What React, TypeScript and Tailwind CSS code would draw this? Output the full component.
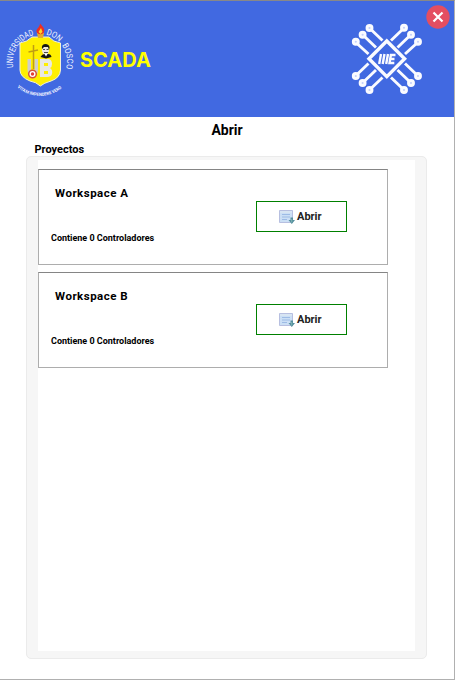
import React from "react";

function UniversityLogo() {
  return (
    <svg width="80" height="90" viewBox="0 0 80 90" className="shrink-0">
      <defs>
        <path id="leftArc" d="M13.4 52.5 A27.5 27.5 0 0 1 35 20" />
        <path id="rightArc" d="M46 19.5 A28 28 0 0 1 66 54" />
        <path id="bottomArc" d="M16 71 A34 34 0 0 0 64 71" />
      </defs>
      <g fill="#f0f3ff" className="font-['Roboto']">
        <text fontSize="8.8"><textPath href="#leftArc" textLength="42" lengthAdjust="spacingAndGlyphs">UNIVERSIDAD</textPath></text>
        <text fontSize="8.6" wordSpacing="2.5"><textPath href="#rightArc" textLength="44" lengthAdjust="spacingAndGlyphs">DON BOSCO</textPath></text>
        <text fontSize="4.4" fontWeight="700"><textPath href="#bottomArc" startOffset="2" textLength="48" lengthAdjust="spacingAndGlyphs">VITAM IMPENDERE VERO</textPath></text>
      </g>
      <path d="M20 28 Q27 27 32 22 H49 Q53 27 60.5 28 V55 Q60 63 51 66 Q44 68 40.3 71 Q36 67 30 66 Q20 62 20 55 Z" fill="#ffef00" stroke="#f4f3d5" strokeWidth="1" />
      <path d="M37 18 H44 L43 23 H38 Z" fill="#e4ac2c" />
      <path d="M40 8.5 C43 12 45.5 14 43.5 18 Q40.5 20.5 37.2 18 C34.5 14 40 13 40 8.5Z" fill="#ed2e22" />
      <path d="M41 13 L42.5 17 L40.5 19 L38.5 17Z" fill="#ffd525" />
      <path d="M27.5 44 V55 Q27.5 61 33 61 Q38 61 38 55 V44 H34.5 V56 H31 V44Z" fill="#cfcfcb" />
      <path d="M40 44 H49 Q52 45 52 49 Q52 52 50 53 Q53 55 52 59 Q51 62 47 62 H40Z M44 48 V51 H48 V48Z M44 56 V59 H48 V56Z" fill="#e9e8e4" fillRule="evenodd" />
      <path d="M33.5 30 V54 M28.5 37 L38 35" stroke="#bf9d12" strokeWidth="1.5" />
      <circle cx="32.5" cy="59" r="3.8" fill="#fff" stroke="#d65338" strokeWidth="1.5" />
      <circle cx="32.5" cy="59" r="1.7" fill="#e53d33" />
      <ellipse cx="45.5" cy="35" rx="3.5" ry="4.8" fill="#eee9de" />
      <path d="M42 34 Q41 29 46 29 Q51 30 49 35 L48 32 L44 32Z" fill="#171715" />
      <path d="M43 34.5 H45 M46.5 34.5 H48.5 M44 37.5 H48" stroke="#252525" strokeWidth=".8" />
      <path d="M40.5 42 Q42 39 44.5 39 L48 39 Q51 39 51.5 42 L46 43.5Z" fill="#171715" />
      <path d="M44.5 39 L46 41.5 L47.5 39Z" fill="#fff" />
    </svg>
  );
}

function CircuitLogo() {
  return (
    <svg width="85" height="85" viewBox="0 0 85 85" fill="none" stroke="#fafbff">
      <path d="M41.8 26 L59.6 43.8 L41.8 61.6 L24 43.8Z" strokeWidth="3.4" />
      <g strokeWidth="2.9">
        <path d="M26 14.5 L37.5 25.5 M19 21 L31 32.5 M12 28.5 L23.5 39 M57.5 14.5 L46 25.5 M64.5 21 L52.5 32.5 M71.5 28.5 L60 39" />
        <path d="M26 73.5 L37.5 62.5 M19 66.5 L31 55 M12 59.5 L23.5 48.5 M57.5 73.5 L46 62.5 M64.5 66.5 L52.5 55 M71.5 59.5 L60 48.5" />
      </g>
      <g fill="#c4d0fa" strokeWidth="2.9">
        <circle cx="24.5" cy="13" r="2.5" /><circle cx="17.6" cy="19.8" r="2.5" /><circle cx="10.8" cy="26.8" r="2.5" />
        <circle cx="59" cy="12.8" r="2.5" /><circle cx="66" cy="19.8" r="2.5" /><circle cx="73" cy="26.8" r="2.5" />
        <circle cx="10.8" cy="61" r="2.5" /><circle cx="17.6" cy="68" r="2.5" /><circle cx="24.5" cy="75" r="2.5" />
        <circle cx="73" cy="61" r="2.5" /><circle cx="66" cy="68" r="2.5" /><circle cx="59" cy="75" r="2.5" />
      </g>
      <path d="M36 39 L34.2 49 M39.5 39 L37.7 49 M43 39 L41.2 49 M50.5 40 H45.9 L44.5 48 H49.3 M45.2 44 H49.5" strokeWidth="2.4" />
    </svg>
  );
}

function FormIcon() {
  return (
    <svg width="17" height="16" viewBox="0 0 17 16" className="shrink-0">
      <path d="M.5 1.5H13.5V13.5H.5Z" fill="#cbdff5" stroke="#b7bfe0" />
      <path d="M1 2H13V4H1Z" fill="#d7e5f3" />
      <path d="M3 5.5H11 M3 8H11 M3 10.5H8" stroke="#9dbbe5" />
      <path d="M11.5 8.5H14V11H16L12.8 15L9.5 11H11.5Z" fill="#568f9e" />
      <path d="M12.7 10V13.5" stroke="#7eb4b2" />
    </svg>
  );
}

function Workspace({ name }: { name: string }) {
  return (
    <article className="flex h-24 w-[350px] justify-between border border-[#adadad] border-t-[#858585] pr-10">
      <div className="pl-3">
        <h2 className="ml-1 mt-3.5 text-[11.5px] leading-[18px] font-bold tracking-[0.5px]">{name}</h2>
        <p className="mt-[29px] text-[9px] leading-3.5 font-bold">Contiene 0 Controladores</p>
      </div>
      <button className="mt-[31px] flex h-[31px] w-[91px] items-center border border-[#008000] pl-[22px] text-[11px] font-bold text-[#222]">
        <FormIcon /><span className="ml-px pt-0.5">Abrir</span>
      </button>
    </article>
  );
}

export default function App() {
  return (
    <main className="flex h-[680px] w-[455px] flex-col border-t border-r border-b border-[#b0b0b0] border-t-[#888] bg-white font-['Roboto','Liberation_Sans',sans-serif] text-black">
      <header className="relative flex h-[116px] shrink-0 justify-between bg-[#4169e1] pt-[14px] pr-6">
        <div className="flex">
          <UniversityLogo />
          <h1 className="mt-[30px] font-['Inter',sans-serif] text-[20px] leading-[30px] font-bold text-[#ffff00]">SCADA</h1>
        </div>
        <CircuitLogo />
        <button aria-label="Cerrar" className="absolute top-1 right-1 size-6">
          <svg width="24" height="24" viewBox="0 0 24 24"><circle cx="12" cy="12" r="11.7" fill="#e44e61" /><path d="M7.5 7.5L16.5 16.5M16.5 7.5L7.5 16.5" stroke="white" strokeWidth="2.2" /></svg>
        </button>
      </header>
      <h2 className="mt-[3px] text-center text-sm leading-5 font-bold">Abrir</h2>
      <h3 className="ml-[34.5px] pt-1 text-[11px] leading-3 font-bold">Proyectos</h3>
      <section className="ml-[26px] h-[503px] w-[401px] shrink-0 rounded-[5px] border border-[#ebebeb] bg-[#f6f6f6] px-[11px] pt-[3px]">
        <div className="flex h-[491px] flex-col gap-[7px] bg-white pt-[9px]">
          <Workspace name="Workspace A" />
          <Workspace name="Workspace B" />
        </div>
      </section>
    </main>
  );
}
